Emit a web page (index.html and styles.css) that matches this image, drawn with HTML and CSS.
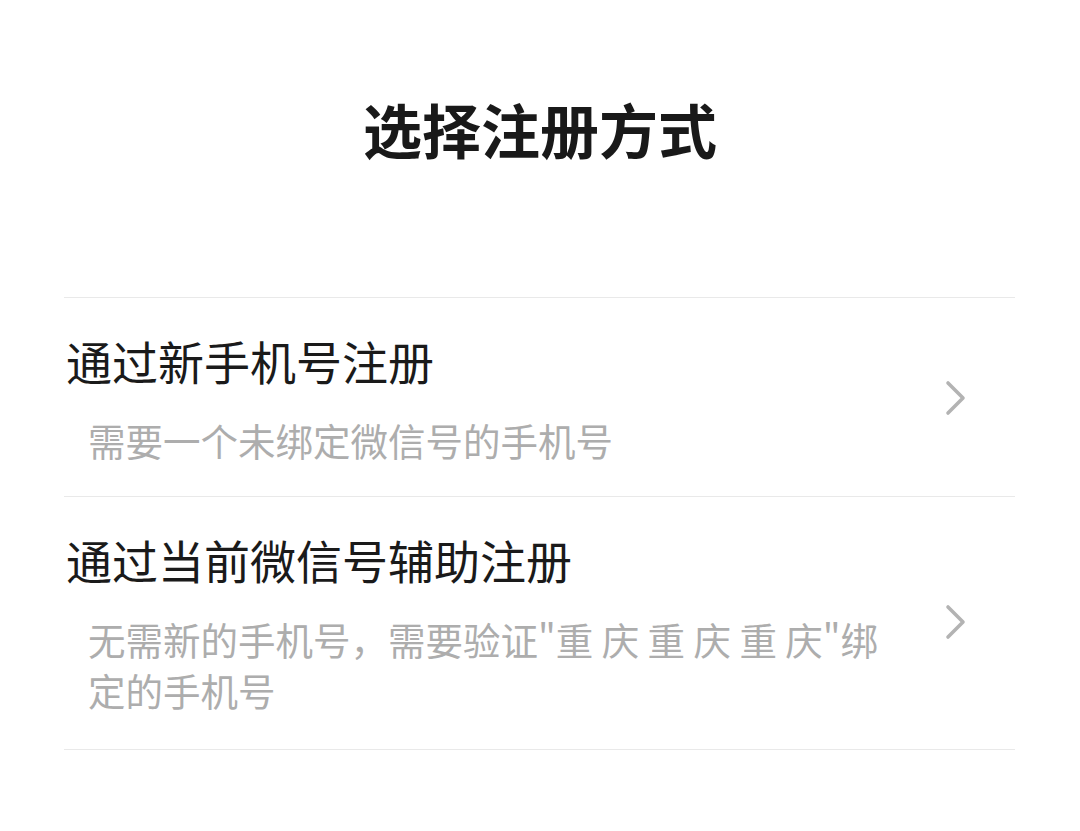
FILE: index.html
```html
<!DOCTYPE html>
<html lang="zh-CN">

<head>
  <meta charset="UTF-8">
  <meta name="viewport" content="width=device-width, initial-scale=1.0">
  <title>选择注册方式</title>
  <link rel="stylesheet" href="styles.css">
</head>

<body>
  <h1 class="page-title">选择注册方式</h1>

  <div class="option-list">
    <div class="option">
      <div class="option-text">
        <div class="option-title">通过新手机号注册</div>
        <div class="option-desc">需要一个未绑定微信号的手机号</div>
      </div>
      <svg class="chevron" width="22" height="36" viewBox="0 0 22 36">
        <polyline points="3,3 18,18 3,33" fill="none" stroke="#b3b3b3" stroke-width="3.6" stroke-linecap="round" stroke-linejoin="round" />
      </svg>
    </div>

    <div class="option">
      <div class="option-text">
        <div class="option-title">通过当前微信号辅助注册</div>
        <div class="option-desc">无需新的手机号，需要验证"重 庆 重 庆 重 庆"绑定的手机号</div>
      </div>
      <svg class="chevron" width="22" height="36" viewBox="0 0 22 36">
        <polyline points="3,3 18,18 3,33" fill="none" stroke="#b3b3b3" stroke-width="3.6" stroke-linecap="round" stroke-linejoin="round" />
      </svg>
    </div>
  </div>
</body>

</html>
```

FILE: styles.css
```css
body {
  margin: 0;
  background: #fff;
  font-family: "Noto Sans CJK SC", "Noto Sans", sans-serif;
  color: #1a1a1a;
}

.page-title {
  margin: 0;
  padding-top: 89px;
  font-size: 59px;
  line-height: 80px;
  font-weight: 700;
  text-align: center;
  color: #191919;
}

.option-list {
  margin: 128px 65px 0 64px;
  border-top: 1px solid #e9e9e9;
}

.option {
  display: flex;
  align-items: center;
  padding: 32px 0 34px 2px;
  border-bottom: 1px solid #e9e9e9;
}

.option:first-child {
  padding-top: 32px;
  padding-bottom: 31px;
}

.option-text {
  flex: 1;
  margin-right: 49px;
}

.option-title {
  font-size: 46px;
  line-height: 60px;
  color: #1a1a1a;
}

.option-desc {
  margin-top: 24px;
  padding-left: 22px;
  font-size: 37.5px;
  line-height: 51px;
  color: #adadad;
}

.chevron {
  flex: none;
  margin-right: 48px;
}
```
